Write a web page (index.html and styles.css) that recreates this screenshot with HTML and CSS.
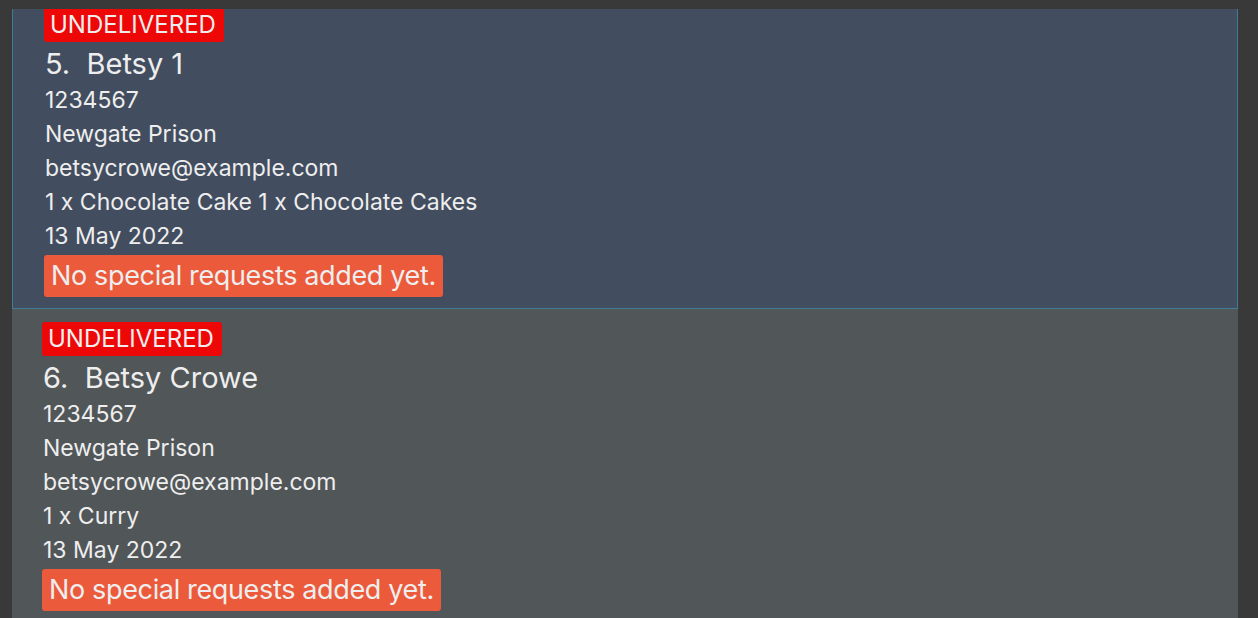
FILE: index.html
```html
<!DOCTYPE html>
<html>
<head>
<meta charset="utf-8">
<link rel="stylesheet" href="styles.css">
</head>
<body>
<div class="viewport">
  <div class="list">
    <div class="card selected">
      <span class="status">UNDELIVERED</span>
      <div class="name">5.&nbsp; Betsy 1</div>
      <div class="line">1234567</div>
      <div class="line">Newgate Prison</div>
      <div class="line">betsycrowe@example.com</div>
      <div class="line">1 x Chocolate Cake 1 x Chocolate Cakes</div>
      <div class="line">13 May 2022</div>
      <span class="request">No special requests added yet.</span>
    </div>
    <div class="card">
      <span class="status">UNDELIVERED</span>
      <div class="name">6.&nbsp; Betsy Crowe</div>
      <div class="line">1234567</div>
      <div class="line">Newgate Prison</div>
      <div class="line">betsycrowe@example.com</div>
      <div class="line">1 x Curry</div>
      <div class="line">13 May 2022</div>
      <span class="request">No special requests added yet.</span>
    </div>
  </div>
</div>
</body>
</html>
```
FILE: styles.css
```css
html, body {
  margin: 0;
  padding: 0;
  height: 100%;
  background: #393939;
  overflow: hidden;
}
body {
  font-family: "Inter", "Noto Sans", sans-serif;
  color: #eeeeee;
}
.viewport {
  margin: 9px 20px 0 12px;
  height: 609px;
  overflow: hidden;
}
.list {
  margin-top: -14px;
  display: flex;
  flex-direction: column;
}
.card {
  background: #515659;
  height: 314px;
  box-sizing: border-box;
  padding: 13px 0 0 30px;
  display: flex;
  flex-direction: column;
  align-items: flex-start;
}
.card.selected {
  background: #424d5f;
  border: 1px solid #3e7d93;
  padding: 12px 0 0 31px;
}
.status {
  background: #ee0707;
  border-radius: 3px;
  font-size: 24px;
  line-height: 34px;
  height: 34px;
  padding: 0 8px 0 6px;
}
.name {
  font-size: 29px;
  line-height: 38px;
  margin-top: 3px;
  padding-left: 1px;
}
.line {
  font-size: 23px;
  line-height: 34px;
  padding-left: 1px;
}
.request {
  margin-top: 2px;
  background: #ec5a3c;
  border-radius: 3px;
  font-size: 27px;
  line-height: 42px;
  height: 42px;
  padding: 0 7px;
  letter-spacing: -0.35px;
}
```
